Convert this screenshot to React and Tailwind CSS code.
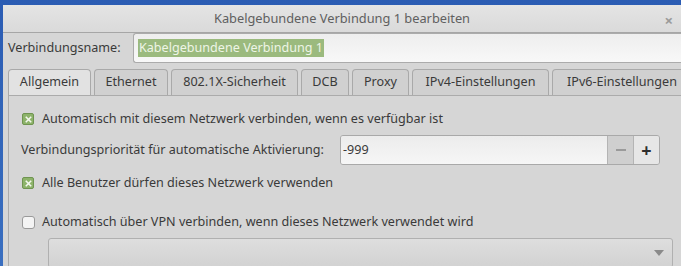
import React from "react";

const font = { fontFamily: '"Noto Sans", "Open Sans", sans-serif' };

const tabs = [
  { label: "Allgemein", w: "w-[83px]", active: true },
  { label: "Ethernet", w: "w-[74px]" },
  { label: "802.1X-Sicherheit", w: "w-[127px]" },
  { label: "DCB", w: "w-[48px]" },
  { label: "Proxy", w: "w-[57px]" },
  { label: "IPv4-Einstellungen", w: "w-[137px]" },
  { label: "IPv6-Einstellungen", w: "w-[140px]" },
];

const Check = ({ checked }) =>
  checked ? (
    <span className="flex h-[12px] w-[12px] shrink-0 items-center justify-center rounded-[2px] border border-[#6f9450] bg-[#8db36a]">
      <svg viewBox="0 0 8 8" className="h-[7px] w-[7px]">
        <path d="M1.5 1.5l5 5M6.5 1.5l-5 5" stroke="#f4f8ee" strokeWidth="1.8" strokeLinecap="square" />
      </svg>
    </span>
  ) : (
    <span className="h-[13px] w-[13px] shrink-0 rounded-[3px] border border-[#9a9a9a] bg-[#f4f4f4]" />
  );

export default function App() {
  return (
    <div className="h-[266px] w-[681px] overflow-hidden bg-gradient-to-b from-[#2b5cb3] to-[#3a6fc0] pl-[3px] pt-[5px] text-[12.6px] text-[#3a3a3a]" style={font}>
      <div className="flex h-full flex-col rounded-tl-[4px] bg-[#d6d6d6]">
        {/* title bar */}
        <div className="relative flex h-[28px] shrink-0 items-center justify-center border-b border-[#a6a6a6] bg-gradient-to-b from-[#e4e4e4] to-[#dadada]">
          <span className="text-[12.8px] text-[#606060]">Kabelgebundene Verbindung 1 bearbeiten</span>
          <span className="absolute right-[8px] top-[4px] text-[15px] font-bold text-[#9a9a9a]">×</span>
        </div>

        {/* name row */}
        <div className="flex h-[30px] shrink-0 items-center">
          <span className="w-[130px] shrink-0 pl-[5px]">Verbindungsname:</span>
          <div className="flex h-full flex-1 items-center rounded-l-[3px] border border-r-0 border-[#ababab] bg-gradient-to-b from-[#eeeeee] to-[#f8f8f8] pl-[4px]">
            <span className="bg-[#9bba7e] px-[1px] leading-[18px] text-[#eef5e6]">Kabelgebundene Verbindung 1</span>
          </div>
        </div>

        {/* tabs */}
        <div className="mt-[6px] flex h-[26px] shrink-0 items-end gap-[3px] pl-[5px]">
          {tabs.map((t) => (
            <div
              key={t.label}
              className={`${t.w} flex h-[26px] shrink-0 items-center justify-center rounded-t-[4px] border border-b-0 border-[#a9a9a9] ${
                t.active ? "bg-[#e2e2e2]" : "bg-[#d0d0d0]"
              }`}
            >
              {t.label}
            </div>
          ))}
        </div>

        {/* page */}
        <div className="ml-[5px] flex flex-1 flex-col border-l border-t border-[#ababab] bg-[#d6d6d6] pl-[12px] pt-[13px]">
          <div className="flex h-[20px] items-center gap-[8px] pl-[1px]">
            <Check checked />
            <span>Automatisch mit diesem Netzwerk verbinden, wenn es verfügbar ist</span>
          </div>

          <div className="mt-[6px] flex h-[30px] items-center">
            <span className="w-[319px] shrink-0">Verbindungspriorität für automatische Aktivierung:</span>
            <div className="flex h-full w-[320px] overflow-hidden rounded-[3px] border border-[#a9a9a9]">
              <div className="flex flex-1 items-center bg-gradient-to-b from-[#ececec] to-[#f6f6f6] pl-[2px]">-999</div>
              <div className="flex w-[26px] items-center justify-center border-l border-[#b4b4b4] bg-[#cfcfcf]">
                <span className="h-[2px] w-[10px] bg-[#9a9a9a]" />
              </div>
              <div className="flex w-[26px] items-center justify-center border-l border-[#b4b4b4] bg-[#e6e6e6] text-[18px] font-bold text-[#2e2e2e]">
                +
              </div>
            </div>
          </div>

          <div className="mt-[8px] flex h-[20px] items-center gap-[8px] pl-[1px]">
            <Check checked />
            <span>Alle Benutzer dürfen dieses Netzwerk verwenden</span>
          </div>

          <div className="mt-[19px] flex h-[20px] items-center gap-[7px] pl-[1px]">
            <Check />
            <span>Automatisch über VPN verbinden, wenn dieses Netzwerk verwendet wird</span>
          </div>

          <div className="ml-[27px] mr-[8px] mt-[6px] flex h-[30px] items-center justify-end rounded-[3px] border border-[#b0b0b0] bg-gradient-to-b from-[#dedede] to-[#d2d2d2] pr-[8px]">
            <svg viewBox="0 0 10 6" className="h-[6px] w-[10px]">
              <path d="M0 0h10L5 6z" fill="#8a8a8a" />
            </svg>
          </div>
        </div>
      </div>
    </div>
  );
}
